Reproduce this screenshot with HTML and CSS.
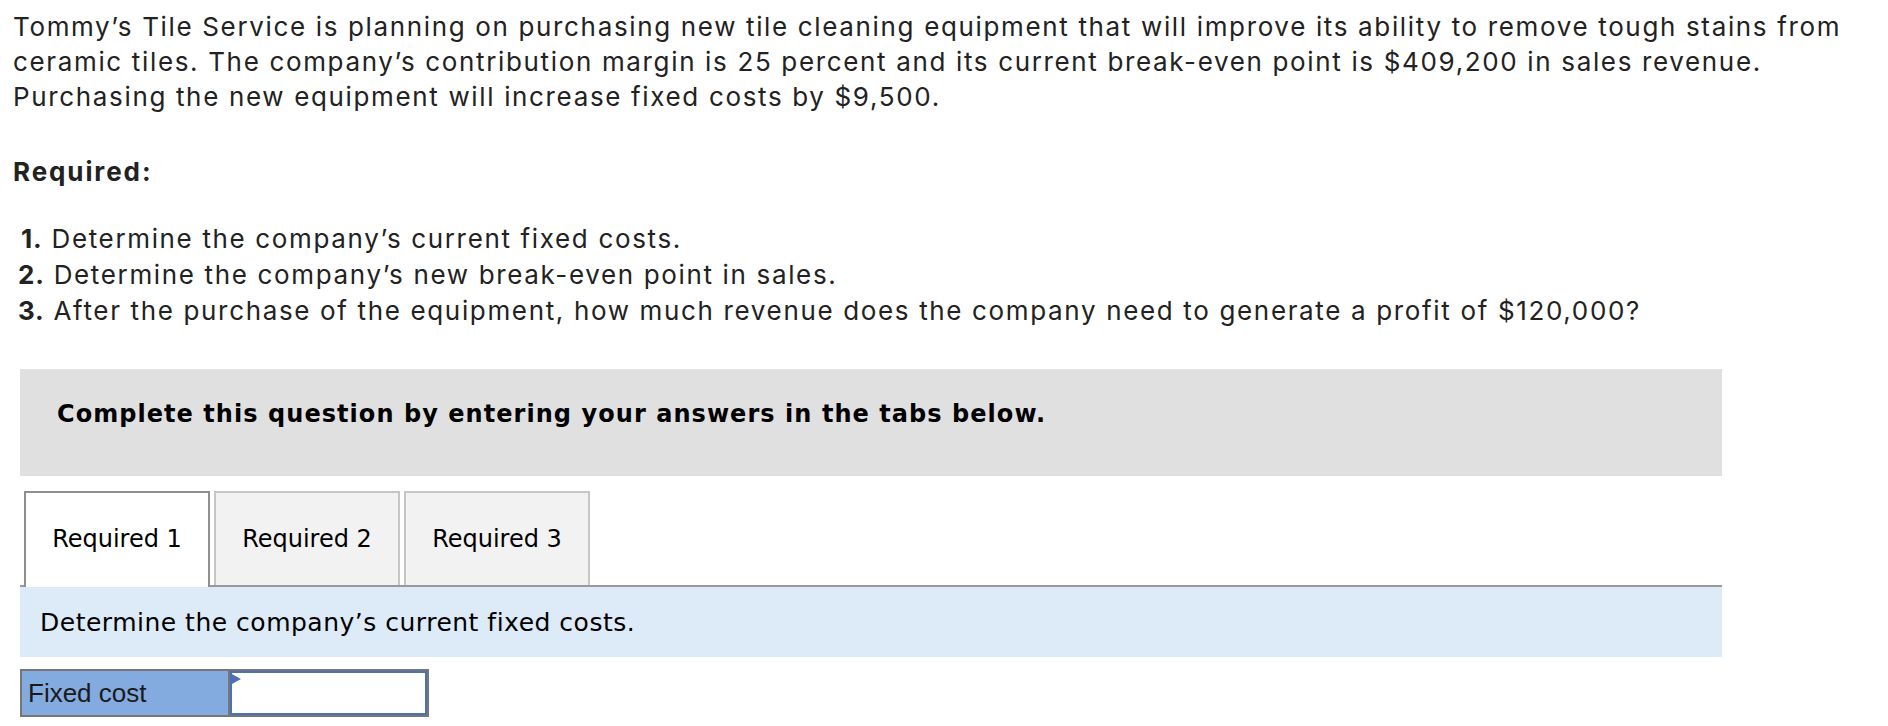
FILE: index.html
```html
<!DOCTYPE html>
<html lang="en">
<head>
<meta charset="utf-8">
<title>Tommy’s Tile Service</title>
<link rel="stylesheet" href="styles.css">
</head>
<body>
<div class="page">
  <p class="intro">Tommy’s Tile Service is planning on purchasing new tile cleaning equipment that will improve its ability to remove tough stains from<br>ceramic tiles. The company’s contribution margin is 25 percent and its current break-even point is $409,200 in sales revenue.<br>Purchasing the new equipment will increase fixed costs by $9,500.</p>
  <h3 class="req-title">Required:</h3>
  <ol class="req-list">
    <li><b class="num num-one">1.</b> Determine the company’s current fixed costs.</li>
    <li><b class="num">2.</b> Determine the company’s new break-even point in sales.</li>
    <li><b class="num">3.</b> After the purchase of the equipment, how much revenue does the company need to generate a profit of $120,000?</li>
  </ol>
  <div class="widget">
    <div class="instructions">Complete this question by entering your answers in the tabs below.</div>
    <div class="tabs">
      <div class="tab active">Required 1</div>
      <div class="tab">Required 2</div>
      <div class="tab">Required 3</div>
    </div>
    <div class="tab-panel">Determine the company’s current fixed costs.</div>
    <div class="answer-row">
      <div class="answer-label">Fixed cost</div>
      <div class="answer-input"><span class="marker"></span></div>
    </div>
  </div>
</div>
</body>
</html>
```
FILE: styles.css
```css
* { box-sizing: border-box; }
html, body { margin: 0; padding: 0; background: #ffffff; }
body { font-family: Inter, "Open Sans", "Liberation Sans", sans-serif; color: #222222; }
.page { padding-top: 9px; }
.intro {
  margin: 0;
  padding-left: 13px;
  font-size: 26px;
  line-height: 35px;
  letter-spacing: 1.65px;
  white-space: nowrap;
}
.req-title {
  margin: 40px 0 0;
  padding-left: 13px;
  font-size: 26px;
  line-height: 35px;
  font-weight: 700;
  letter-spacing: 1.9px;
}
.req-list {
  list-style: none;
  margin: 32px 0 0;
  padding-left: 18px;
  font-size: 26px;
  line-height: 36px;
  letter-spacing: 1.65px;
  white-space: nowrap;
}
.num { font-weight: 700; letter-spacing: 0.8px; }
.num-one { margin-left: 3px; }
.widget {
  margin: 40px 0 0 20px;
  width: 1702px;
}
.instructions {
  background: #e0e0e0;
  height: 107px;
  padding: 30px 0 0 37px;
  font-family: "DejaVu Sans", Verdana, sans-serif;
  font-weight: 700;
  font-size: 24px;
  letter-spacing: 1.05px;
  line-height: 30px;
  color: #000000;
}
.tabs {
  display: flex;
  gap: 4px;
  margin: 15px 0 0 4px;
  align-items: flex-end;
  position: relative;
  z-index: 1;
}
.tab {
  width: 186px;
  height: 94px;
  display: flex;
  align-items: center;
  justify-content: center;
  background: #f2f2f2;
  border: 2px solid #c6c6c6;
  border-bottom: none;
  font-family: "DejaVu Sans", Verdana, sans-serif;
  font-size: 24px;
  color: #000000;
}
.tab.active {
  background: #ffffff;
  border-color: #8f8f8f;
  height: 96px;
  margin-bottom: -2px;
  padding-bottom: 2px;
}
.tab-panel {
  border-top: 2px solid #999999;
  background: #ddeaf7;
  height: 72px;
  padding-left: 20px;
  display: flex;
  align-items: center;
  font-family: "DejaVu Sans", Verdana, sans-serif;
  font-size: 25px;
  letter-spacing: 0.5px;
  color: #000000;
}
.answer-row {
  display: flex;
  width: 409px;
  height: 48px;
  margin-top: 12px;
  border: 2px solid #767676;
}
.answer-label {
  width: 208px;
  background: #84abdf;
  border-right: 2px solid #767676;
  padding-left: 6px;
  display: flex;
  align-items: center;
  font-family: "Liberation Sans", Arial, sans-serif;
  font-size: 26px;
  color: #1a1a1a;
}
.answer-input {
  flex: 1;
  background: #ffffff;
  border: 2px solid #4a72b5;
  position: relative;
}
.marker {
  position: absolute;
  left: -2px;
  top: 0;
  width: 0;
  height: 0;
  border-top: 6px solid transparent;
  border-bottom: 6px solid transparent;
  border-left: 11px solid #4a72b5;
}
```
